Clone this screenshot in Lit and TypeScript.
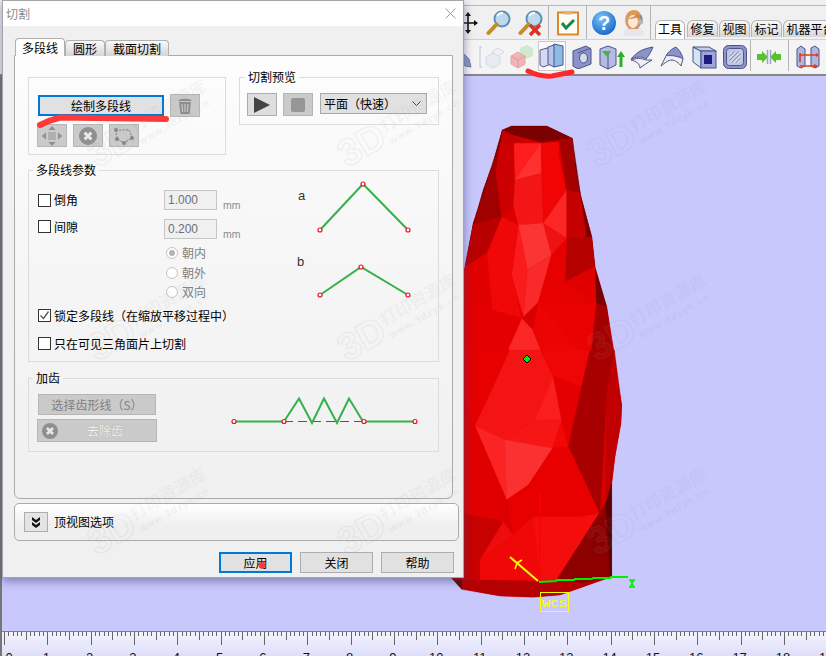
import { LitElement, html, css, svg } from 'lit';
import { customElement } from 'lit/decorators.js';

const CJK = css`"Noto Sans CJK SC", "Liberation Sans", sans-serif`;

// ---- toolbar icons ----
const moveIcon = svg`<svg width="20" height="22" viewBox="0 0 20 22"><path d="M10 1v20M1 11h18" stroke="#111" stroke-width="1.6"/><path d="M10 0l-3 4h6zM10 22l-3-4h6zM0 11l4-3v6zM20 11l-4-3v6z" fill="#111"/></svg>`;
const lens = svg`<circle cx="16" cy="9" r="7.5" fill="#bcd9ee" stroke="#5e8fb5" stroke-width="2"/><path d="M11 6a6 6 0 0 1 6-3" stroke="#fff" stroke-width="2" fill="none"/><path d="M10.5 14.5L2.5 23" stroke="#c58a2a" stroke-width="4" stroke-linecap="round"/>`;
const zoomIcon = svg`<svg width="26" height="26" viewBox="0 0 26 26">${lens}</svg>`;
const zoomXIcon = svg`<svg width="26" height="26" viewBox="0 0 26 26">${lens}<path d="M12 15l10 10M22 15L12 25" stroke="#e0301e" stroke-width="3.4"/></svg>`;
const clipIcon = svg`<svg width="22" height="26" viewBox="0 0 22 26"><rect x="1" y="2.5" width="20" height="22" fill="#fffdf5" stroke="#d98a2b" stroke-width="2"/><rect x="7" y="1" width="8" height="3.5" fill="#e8b070"/><path d="M5 13l4 5 8-8" fill="none" stroke="#15894a" stroke-width="3"/></svg>`;
const helpIcon = svg`<svg width="26" height="26" viewBox="0 0 26 26"><defs><radialGradient id="hb" cx=".4" cy=".3" r=".8"><stop offset="0" stop-color="#7cc4f8"/><stop offset="1" stop-color="#0a5fc8"/></radialGradient></defs><circle cx="13" cy="13" r="12" fill="url(#hb)"/><text x="13" y="20" text-anchor="middle" font-family="Liberation Sans" font-weight="700" font-size="20" fill="#fff">?</text></svg>`;
const personIcon = svg`<svg width="24" height="28" viewBox="0 0 24 28"><path d="M2 27c-1-7 4-9 10-9s11 2 10 9z" fill="#e4e8ee"/><path d="M4 16C1 6 7 1 12 1s9 4 7 14l-3 5H7z" fill="#dc9a5a"/><ellipse cx="11" cy="12.5" rx="5" ry="6.5" fill="#fde6d4"/><path d="M5 9c4 0 9-1 11-5l2 6-3-2c-3 2-6 2-10 1z" fill="#cf8240"/><path d="M18 6a8 8 0 0 1 1 8" stroke="#888" stroke-width="2" fill="none"/><circle cx="18.5" cy="13" r="2.5" fill="#b5b5b5"/><path d="M18 16l-5 3" stroke="#999"/></svg>`;

const blue = '#8b93c8';
const blueD = '#4d5488';
const clipLeft = svg`<svg width="16" height="24" viewBox="0 0 16 24"><path d="M2 4l10 10 2 8-6-1-8-9z" fill="#8a9ac0" stroke="#707c9c"/></svg>`;
const ghostCube = svg`<svg width="28" height="26" viewBox="0 0 28 26"><path d="M4 3H2v20h2" fill="none" stroke="#cdd3de" stroke-width="1.5"/><path d="M8 13l7-4 7 4v7l-7 4-7-4z" fill="#e8ebf2" stroke="#d3d8e4"/><path d="M14 8l6-4 6 4-6 4z" fill="#eff1f6" stroke="#d8dce6"/></svg>`;
const redCube = svg`<svg width="24" height="26" viewBox="0 0 24 26"><path d="M10 4l7-3 6 3v8l-7 3-6-3z" fill="#cfe8cf"/><path d="M1 12l7-4 7 4v8l-7 4-7-4z" fill="#eeb6b6" stroke="#e6a8a8"/><path d="M8 16v8M1 12l7 4 7-4" stroke="#e09a9a" fill="none"/></svg>`;
const sliceIcon = svg`<svg width="26" height="26" viewBox="0 0 26 26"><path d="M1 7l11-3v17l-8 3-3-2z" fill="#d4d8f2" stroke="${blueD}"/><path d="M12 4l3-3 9 2v19l-9 2-3-3z" fill="#8cbce6" stroke="${blueD}"/><path d="M9 4l6-2v22l-6-3z" fill="#b4c4ea" stroke="${blueD}"/></svg>`;
const holeIcon = svg`<svg width="20" height="24" viewBox="0 0 20 24"><path d="M1 6l13-5 5 3v15l-13 5-5-3z" fill="${blue}" stroke="${blueD}"/><path d="M6 8l13-5" stroke="${blueD}"/><ellipse cx="11.5" cy="13" rx="4" ry="5" fill="#d8dcec" stroke="${blueD}"/></svg>`;
const arrowBox = svg`<svg width="26" height="26" viewBox="0 0 26 26"><path d="M1 5l8-3 8 3v16l-8 4-8-4z" fill="#b6bbe0" stroke="${blueD}"/><path d="M9 8v17" stroke="${blueD}"/><path d="M3 7h9l-4 6z" fill="#45b545"/><path d="M22 7l4 6h-2.5v10h-3V13H18z" fill="#2bb02b"/></svg>`;
const surfA = svg`<svg width="24" height="24" viewBox="0 0 24 24"><path d="M1 14C7 7 12 4 23 2c-3 7-4 8-7 12C11 11 6 12 1 14z" fill="${blue}" stroke="${blueD}"/><path d="M1 15c5-2 10-2 15 0l6 0c-5 3-8 5-12 8 0-4-4-7-9-8z" fill="#eef0f6" stroke="${blueD}"/></svg>`;
const surfB = svg`<svg width="24" height="22" viewBox="0 0 24 22"><path d="M6 10C9 4 14 2 16 1c2 2 6 6 7 12-5-3-11-4-17-3z" fill="${blue}" stroke="${blueD}"/><path d="M6 10L1 20c4-3 7-6 11-6 3 0 7 3 9 6l2-7" fill="#eef0f6" stroke="${blueD}"/></svg>`;
const tunnel = svg`<svg width="25" height="24" viewBox="0 0 25 24"><path d="M1 2l8 4v17L1 17z" fill="#d4e4f6" stroke="${blueD}"/><path d="M1 2h16l7 4H9z" fill="#c8ccea" stroke="${blueD}"/><rect x="9" y="6" width="15" height="17" fill="#9ca6dc" stroke="${blueD}"/><rect x="12" y="10" width="8" height="9" fill="#1c1c80"/></svg>`;
const hatch = svg`<svg width="24" height="24" viewBox="0 0 24 24"><defs><pattern id="ht" width="3" height="3" patternUnits="userSpaceOnUse" patternTransform="rotate(45)"><rect width="3" height="3" fill="#e2e4f2"/><rect width="1.2" height="3" fill="#8088b8"/></pattern></defs><rect x=".5" y=".5" width="23" height="23" rx="5" fill="${blue}" stroke="${blueD}"/><rect x="3.5" y="3.5" width="17" height="17" rx="3" fill="#c2c6e4" stroke="${blueD}"/><rect x="6.5" y="6.5" width="11" height="11" fill="url(#ht)"/></svg>`;
const squeeze = svg`<svg width="26" height="14" viewBox="0 0 26 14"><path d="M1 4h5V1l6 6-6 6v-3H1z" fill="#58c22a"/><path d="M25 4h-5V1l-6 6 6 6v-3h5z" fill="#58c22a"/><path d="M11.5 0v14M14.5 0v14" stroke="#9aa4cc" stroke-width="1.5"/></svg>`;
const redArrows = svg`<svg width="24" height="24" viewBox="0 0 24 24"><path d="M1 4l4-3 4 3v17l-4 2-4-2zM15 3l4-2 4 3v17l-4 2-4-2z" fill="#b0b6de" stroke="${blueD}"/><path d="M4 10h16M4 21h17" stroke="#e03a22" stroke-width="1.6"/><path d="M4 8v9" stroke="#e03a22" stroke-width="1.6"/><path d="M20 8l3 2-3 2zM18 19l4 2-4 2z" fill="#e03a22"/></svg>`;

const row1Icons = [moveIcon, zoomIcon, zoomXIcon, null, clipIcon, null, helpIcon, personIcon, null];
const row2Icons = [clipLeft, ghostCube, redCube, sliceIcon, holeIcon, arrowBox, surfA, surfB, tunnel, hatch, null, squeeze, null, redArrows];
const topTabs = ['工具', '修复', '视图', '标记', '机器平台'];

@customElement('main-toolbar')
export class MainToolbar extends LitElement {
  static styles = css`
    :host { display: block; height: 76px; box-sizing: border-box; padding: 5px 0 0 452px; background: #f0f0f0; border-bottom: 2px solid #868686; overflow: hidden; }
    .row1 { display: grid; grid-template-columns: 31px 32px 31px 4px 35px 2px 33px 28px 4px auto; height: 34px; border-top: 1px solid #b9b9b9; box-sizing: border-box; }
    .row2 { display: grid; grid-template-columns: 26px 28px 31px 30px 29px 31px 30px 30px 35px 26px 4px 34px 4px 36px; height: 35px; border-top: 1px solid #d2d2d2; box-sizing: border-box; background: #f4f4f4; }
    .cell { display: flex; align-items: center; justify-content: center; min-width: 0; }
    .cell.on { margin: 1px 1px 3px; border: 1px solid #c8c8c8; background: #fbfbfb; }
    .sep { width: 1px; justify-self: center; background: #b4b4b4; }
    .row2 .sep { margin-bottom: 3px; }
    .tabs { display: flex; align-self: end; gap: 1px; margin-left: 3px; white-space: nowrap; }
    .tab { box-sizing: border-box; height: 17px; padding: 0 2.5px; font: 12px/16px ${CJK}; color: #000; background: linear-gradient(#f8f8f8, #d6d6d6); border: 1px solid #b4b4b4; border-bottom: none; border-radius: 6px 6px 0 0; }
    .tab.active { height: 19px; padding: 0 2px; background: #fff; margin-right: 1px; }
  `;

  render() {
    return html`
      <div class="row1">
        ${row1Icons.map((i) => (i ? html`<div class="cell">${i}</div>` : html`<div class="sep"></div>`))}
        <div class="tabs">
          ${topTabs.map((t, n) => html`<div class="tab ${n === 0 ? 'active' : ''}">${t}</div>`)}
        </div>
      </div>
      <div class="row2">
        ${row2Icons.map((i, n) => (i ? html`<div class="cell ${n === 3 ? 'on' : ''}">${i}</div>` : html`<div class="sep"></div>`))}
      </div>
    `;
  }
}

// ---- 3D view: facets traced in 3x coordinates ----
const upper: [string, string][] = [
  ['187,60 215,48 320,48 397,85 303,98 215,75', '#7d0000'],
  ['187,60 215,75 262,100 180,100', '#c40000'],
  ['215,75 303,98 262,100', '#d40000'],
  ['303,98 397,85 358,95', '#b00000'],
  ['180,100 168,190 185,320 100,345 130,240', '#a00000'],
  ['187,60 155,170 100,340 75,470 100,345 130,240 180,100', '#6c0000'],
  ['180,100 222,100 225,210 220,285 185,320 168,190', '#cc0000'],
  ['222,100 303,100 225,210', '#ff1c1c'],
  ['303,100 305,190 225,210', '#ff3030'],
  ['225,210 305,190 310,340 235,345 220,285', '#f41616'],
  ['303,100 358,95 355,130 378,240 310,340 305,190', '#f00404'],
  ['310,340 380,240 380,385', '#fb2626'],
  ['358,95 397,85 405,170 420,250 380,240', '#a40000'],
  ['380,240 420,250 455,380 380,385', '#c40000'],
  ['397,85 405,170 420,250 455,380 465,470 500,590 468,580 430,310', '#7a0000'],
  ['235,345 310,340 335,435 262,480', '#fb3434'],
  ['310,340 380,385 335,435', '#f01212'],
  ['262,480 335,435 295,575 250,620', '#fb2a2a'],
  ['235,345 262,480 250,620 215,495', '#fa1c1c'],
  ['185,320 235,345 215,495 245,625 155,600 140,430', '#f00808'],
  ['100,345 185,320 140,430 75,470', '#b80000'],
  ['75,470 140,430 155,600 75,560', '#e00000'],
  ['380,385 455,380 465,470 375,515', '#b50000'],
  ['335,435 380,385 375,515 465,575 295,575', '#e60000'],
  ['375,515 465,470 468,580', '#e00000'],
  ['468,580 500,590 523,750 450,750', '#a40000'],
  ['295,575 468,580 450,750 380,680', '#ea0202'],
  ['245,625 278,660 315,750 190,750', '#fb2626'],
  ['278,660 295,575 380,680 450,750 315,750', '#ec0404'],
  ['75,560 155,600 245,625 190,750 75,750', '#e40000'],
];
const lower: [string, string][] = [
  ['75,0 210,0 165,100 105,228 75,150', '#e60000'],
  ['210,0 300,0 340,80 285,210 195,270 105,228 165,100', '#f41414'],
  ['300,0 450,0 425,110 340,80', '#ee0505'],
  ['340,80 365,210 285,210', '#fb1e1e'],
  ['285,210 365,210 338,295 195,270', '#f61616'],
  ['365,210 385,290 338,295', '#f20606'],
  ['340,80 425,110 385,290 365,210', '#e40000'],
  ['105,228 195,270 200,450', '#fb2424'],
  ['195,270 338,295 265,405 200,450', '#fb3030'],
  ['425,110 450,0 523,0 500,130 480,490 385,290', '#a80000'],
  ['500,130 523,0 545,165 543,220 525,320 515,400 497,460', '#c00000'],
  ['265,405 338,295 385,290 478,490 420,500 280,500', '#e80000'],
  ['200,450 265,405 280,500 220,555', '#e60000'],
  ['75,150 105,228 200,450 190,515 75,490', '#e00000'],
  ['75,490 190,515 120,630 120,690 65,690 35,685', '#c80000'],
  ['190,515 220,555 120,630', '#ee0c0c'],
  ['220,555 280,500 298,580 300,690 120,690 120,630', '#f00808'],
  ['280,500 420,500 478,490 350,690 300,690', '#f30d0d'],
  ['478,490 497,460 510,680 430,700 350,690', '#8c0000'],
  ['65,690 120,690 300,695 350,690 430,700 510,680 430,710 360,735 280,742 180,738 65,718', '#b40000'],
  ['35,685 65,690 65,718', '#700000'],
  ['515,400 497,460 510,680 515,680', '#5c0000'],
];
const outline = '502,130 512,126 547,126 572,138 575,167 580,193 592,237 595,267 607,307 614,350 617,377 622,405 621,423 615,457 612,483 612,577 583,587 560,595 533,597 500,596 462,589 452,578 440,400 440,300 465,267 473,223 492,167';

const facets = (list: [string, string][]) =>
  list.map(([p, c]) => svg`<polygon points=${p} fill=${c} stroke=${c} stroke-width="1"/>`);

@customElement('model-view')
export class ModelView extends LitElement {
  static styles = css`
    :host { position: absolute; inset: 0; display: block; }
    svg { display: block; }
    text { font-family: "Liberation Mono", monospace; }
  `;

  render() {
    return html`<svg width="826" height="656" viewBox="0 0 826 656">
      <polygon points=${outline} fill="#d80000"/>
      <g transform="translate(440 110) scale(.33333)">${facets(upper)}</g>
      <g transform="translate(440 350) scale(.33333)">${facets(lower)}</g>
      <path d="M540 493V582" stroke="#ff0000" stroke-width="1.3"/>
      <path d="M544 495h7l-7 8h7" stroke="#e80000" stroke-width="1.2" fill="none"/>
      <path d="M510 557L538 581" stroke="#ffff00" stroke-width="2"/>
      <path d="M513 560l4 3 5-3M517 563l-2 6" stroke="#ffff00" stroke-width="1.5" fill="none"/>
      <path d="M539 582l17-1 1-1h17l1-1h17l1-1h17l1-1h17" stroke="#00ee00" stroke-width="2" fill="none"/>
      <path d="M629 580h6M629 587h6M630 580l4 7M634 580l-4 7" stroke="#00ee00" stroke-width="1.5" fill="none"/>
      <rect x="540.5" y="592.5" width="28" height="19" fill="none" stroke="#ffff00" stroke-width="1"/>
      <text x="542" y="607" font-size="11.5" fill="#ffff00" textLength="25" lengthAdjust="spacingAndGlyphs">WCS</text>
      <path d="M527 355l4 4-4 4-4-4z" fill="#00ee00" stroke="#000" stroke-width="1"/>
    </svg>`;
  }
}

// ---- ruler ----
const OX = 2;
const STEP = 43.33;
const ticks = Array.from({ length: 190 }, (_, i) => i);

@customElement('view-ruler')
export class ViewRuler extends LitElement {
  static styles = css`
    :host { display: block; height: 25px; border-top: 1px solid #7d7d8a; box-sizing: border-box; background: linear-gradient(#f3f3fe, #dedefb); overflow: hidden; }
    svg { display: block; }
    text { font: 13px "Liberation Sans", sans-serif; fill: #111; }
  `;

  render() {
    return html`<svg width="826" height="24" viewBox="0 0 826 24">
      ${ticks.map((i) => {
        const x = Math.round(OX + (i * STEP) / 10) + 0.5;
        const h = i % 10 === 0 ? 13 : i % 5 === 0 ? 8 : 4;
        return svg`<path d="M${x} 0v${h}" stroke="#666" stroke-width="1"/>`;
      })}
      ${Array.from({ length: 20 }, (_, n) =>
        svg`<text x=${n === 0 ? 7 : OX + n * STEP - 1} y="30" text-anchor="middle">${n}</text>`)}
    </svg>`;
  }
}

// ---- cut dialog ----
const trash = svg`<svg width="16" height="18" viewBox="0 0 16 18"><path d="M2 5h12l-1.5 12h-9z" fill="#8e8e8e"/><path d="M1 4c1-3 13-3 14 0z" fill="#8e8e8e"/><path d="M5 7l.6 8M8 7v8M11 7l-.6 8" stroke="#cdcdcd" stroke-width="1.1"/></svg>`;
const moveGrey = svg`<svg width="20" height="20" viewBox="0 0 20 20"><path d="M10 0l3.5 4h-7zM10 20l3.5-4h-7zM0 10l4-3.5v7zM20 10l-4-3.5v7z" fill="#8f8f8f"/><rect x="6" y="6" width="8" height="8" fill="#b0b0b0"/></svg>`;
const xCircle = (size: number) => svg`<svg width=${size} height=${size} viewBox="0 0 16 16"><circle cx="8" cy="8" r="8" fill="#8f8f8f"/><path d="M5 5l6 6M11 5l-6 6" stroke="#e8e8e8" stroke-width="2.6"/></svg>`;
const polyGrey = svg`<svg width="22" height="18" viewBox="0 0 22 18"><path d="M3 3h13l3 8-8 5-7-4z" fill="none" stroke="#8f8f8f" stroke-width="1.3" stroke-dasharray="2 1.3"/><g fill="#858585"><circle cx="3" cy="3" r="2"/><circle cx="4" cy="12" r="2"/><circle cx="11" cy="16" r="2"/><circle cx="19" cy="11" r="2"/></g></svg>`;
const play = svg`<svg width="16" height="16" viewBox="0 0 16 16"><path d="M0 0l16 8-16 8z" fill="#444"/></svg>`;
const stop = svg`<svg width="14" height="14" viewBox="0 0 14 14"><rect width="14" height="14" rx="2" fill="#969696"/></svg>`;
const chevDown = svg`<svg width="9" height="6" viewBox="0 0 9 6"><path d="M.5.5l4 4 4-4" fill="none" stroke="#444"/></svg>`;
const dblChev = svg`<svg width="10" height="11" viewBox="0 0 10 11"><path d="M1 0l4 3 4-3v3L5 6 1 3zM1 5l4 3 4-3v3l-4 3-4-3z" fill="#111"/></svg>`;
const check = svg`<svg width="11" height="11" viewBox="0 0 11 11"><path d="M1.5 5.5l3 3 5-7" fill="none" stroke="#555" stroke-width="1.3"/></svg>`;

const dot = (x: number, y: number) => svg`<circle cx=${x} cy=${y} r="2" fill="#fff" stroke="#e8142c" stroke-width="1.2"/>`;
const shapes = svg`<svg class="shapes" width="132" height="124" viewBox="290 178 132 124">
  <text x="298" y="199" font-size="13" fill="#333">a</text>
  <text x="297" y="265" font-size="13" fill="#333">b</text>
  <path d="M320 229L363 183L408 229" fill="none" stroke="#36b14a" stroke-width="2"/>
  ${dot(320, 229)}${dot(363, 183)}${dot(408, 229)}
  <path d="M320 294L361 266L408 294" fill="none" stroke="#36b14a" stroke-width="2"/>
  ${dot(320, 294)}${dot(361, 266)}${dot(408, 294)}
</svg>`;
const teeth = svg`<svg class="teeth" width="190" height="34" viewBox="229 396 190 34">
  <path d="M283 421.5h80" stroke="#e8142c" stroke-dasharray="9 5" fill="none"/>
  <path d="M233 421.5H283L298 398.5L311 423L323 398.5L336 423L348 398.5L362 421.5H414" fill="none" stroke="#36b14a" stroke-width="2"/>
  ${dot(233, 421.5)}${dot(283, 421.5)}${dot(363, 421.5)}${dot(414, 421.5)}
</svg>`;

const box = (checked: boolean) => html`<span class="box">${checked ? check : ''}</span>`;

@customElement('cut-dialog')
export class CutDialog extends LitElement {
  static styles = css`
    :host { position: absolute; left: 2px; top: 0; width: 462px; height: 578px; box-sizing: border-box; display: block; background: #f0f0f0; border: 1px solid #a6a6a6; box-shadow: 0 3px 9px rgba(60, 60, 120, .55); font: 12px/16px ${CJK}; color: #000; }
    .title { display: flex; align-items: center; justify-content: space-between; height: 25px; padding: 0 7px 0 3px; background: #fff; color: #8c8c8c; }
    .close { width: 11px; height: 11px; }
    .body { padding: 12px 4px 0 11px; }
    .tabs { display: flex; align-items: flex-end; height: 18px; position: relative; z-index: 1; margin: 0 0 -1px 1px; }
    .tab { box-sizing: border-box; height: 16px; padding: 0 7px; line-height: 15px; background: linear-gradient(#fafafa, #d4d4d4); border: 1px solid #b0b0b0; border-bottom: none; border-radius: 4px 4px 0 0; }
    .tab.active { height: 18px; padding: 0 6px; background: #fff; line-height: 17px; }
    .pane { box-sizing: border-box; width: 439px; height: 444px; padding: 21px 13px 0; border: 1px solid #ababab; border-radius: 0 0 6px 6px; background: linear-gradient(#fdfdfd, #f6f6f6 45%, #f0f0f0); }
    .top { display: flex; gap: 13px; align-items: flex-start; margin-bottom: 15px; }
    fieldset { margin: 0; padding: 0; border: 1px solid #dcdcdc; min-width: 0; box-sizing: border-box; }
    legend { padding: 0 3px; line-height: 14px; height: 14px; }
    .draw { width: 198px; height: 78px; padding: 16px 0 0 9px; display: grid; grid-template-columns: 126px 30px; column-gap: 6px; align-content: start; }
    .preview { width: 200px; height: 55px; margin-top: -7px; padding: 9px 0 0 7px; display: flex; gap: 6px; align-items: flex-start; }
    .preview legend { margin-left: -2px; }
    .btn { box-sizing: border-box; display: flex; align-items: center; justify-content: center; background: #e1e1e1; border: 1px solid #adadad; }
    .btn.primary { border: 2px solid #0078d7; }
    .dis { background: #cacaca; border-color: #b6b6b6; color: #8a8a8a; }
    .sq { width: 30px; height: 23px; }
    .draw .primary { height: 21px; margin-top: 1px; }
    .sub { grid-column: 1 / 3; display: flex; gap: 6px; margin: 7px 0 0 -1px; }
    .play { background: #dedede; }
    .select { box-sizing: border-box; width: 107px; height: 21px; margin-left: 1px; padding: 0 5px 0 3px; display: flex; align-items: center; justify-content: space-between; background: #e1e1e1; border: 1px solid #a8a8a8; }
    .params { height: 199px; margin-top: -7px; padding: 6px 0 0 9px; display: grid; grid-template-columns: 126px 90px 1fr; grid-template-rows: 34px 19px 7px 20px 19px 19px 29px 27px; align-items: center; }
    .params legend { margin-left: -5px; }
    .check { display: flex; align-items: center; gap: 3px; white-space: nowrap; }
    .box { box-sizing: border-box; display: inline-flex; align-items: center; justify-content: center; width: 13px; height: 13px; border: 1px solid #333; background: #fff; }
    .lock { grid-column: 1 / 3; grid-row: 7; }
    .only { grid-column: 1 / 3; grid-row: 8; }
    .field { display: flex; align-items: flex-end; gap: 6px; }
    .field.low { margin-top: 4px; }
    .num { box-sizing: border-box; width: 53px; height: 20px; padding-left: 3px; font: 12px/18px "Liberation Sans", sans-serif; color: #6f6f7a; background: #f0f0f0; border: 1px solid #c6c6c6; }
    .unit { font: 10.5px/12px "Liberation Sans", sans-serif; color: #8a8a8a; margin-bottom: -1px; }
    .radio { grid-column: 2; display: flex; align-items: center; gap: 4px; margin-left: 2px; color: #808080; }
    .r1 { grid-row: 4; }
    .r2 { grid-row: 5; }
    .r3 { grid-row: 6; }
    .dotbox { box-sizing: border-box; width: 12px; height: 12px; border: 1px solid #c4c4c4; border-radius: 50%; background: #fff; display: flex; align-items: center; justify-content: center; }
    .dotbox.on::after { content: ""; width: 6px; height: 6px; border-radius: 50%; background: #b4b4b4; }
    .shapes { grid-column: 3; grid-row: 1 / 7; align-self: start; margin: -4px 0 0 36px; display: block; font-family: "Liberation Sans", sans-serif; }
    .gear { height: 81px; margin-top: 9px; padding: 9px 0 0 8px; display: grid; grid-template-columns: 120px 1fr; grid-template-rows: 21px 23px; row-gap: 4px; }
    .gear legend { margin-left: -4px; }
    .gear .btn { color: #808080; }
    .gear .pick { width: 118px; margin-left: 1px; }
    .gear .rem { justify-content: flex-start; gap: 29px; padding-left: 4px; color: #f2f2f2; text-shadow: 0 0 1px #999; }
    .teeth { grid-column: 2; grid-row: 1 / 3; margin: 2px 0 0 73px; display: block; }
    .panel { box-sizing: border-box; width: 445px; height: 38px; margin-top: 4px; padding-left: 9px; display: flex; align-items: center; gap: 6px; border: 1px solid #ababab; border-radius: 5px; background: linear-gradient(#fff, #efefef 60%); }
    .panel .btn { width: 24px; height: 20px; background: #e4e4e4; }
    .actions { display: flex; justify-content: flex-end; gap: 8px; width: 440px; margin-top: 11px; }
    .actions .btn { width: 73px; height: 21px; }
  `;

  render() {
    return html`
      <div class="title">
        <span>切割</span>
        <svg class="close" viewBox="0 0 11 11"><path d="M.5.5l10 10M10.5.5l-10 10" stroke="#9a9a9a"/></svg>
      </div>
      <div class="body">
        <div class="tabs">
          <div class="tab active">多段线</div>
          <div class="tab">圆形</div>
          <div class="tab">截面切割</div>
        </div>
        <div class="pane">
          <div class="top">
            <fieldset class="draw">
              <div class="btn primary">绘制多段线</div>
              <div class="btn dis sq">${trash}</div>
              <div class="sub">
                <div class="btn dis sq">${moveGrey}</div>
                <div class="btn dis sq">${xCircle(18)}</div>
                <div class="btn dis sq">${polyGrey}</div>
              </div>
            </fieldset>
            <fieldset class="preview">
              <legend>切割预览</legend>
              <div class="btn sq play">${play}</div>
              <div class="btn dis sq">${stop}</div>
              <div class="select"><span>平面（快速）</span>${chevDown}</div>
            </fieldset>
          </div>
          <fieldset class="params">
            <legend>多段线参数</legend>
            <label class="check">${box(false)}倒角</label>
            <div class="field"><span class="num">1.000</span><span class="unit">mm</span></div>
            ${shapes}
            <label class="check">${box(false)}间隙</label>
            <div class="field low"><span class="num">0.200</span><span class="unit">mm</span></div>
            <div class="radio r1"><span class="dotbox on"></span>朝内</div>
            <div class="radio r2"><span class="dotbox"></span>朝外</div>
            <div class="radio r3"><span class="dotbox"></span>双向</div>
            <label class="check lock">${box(true)}锁定多段线（在缩放平移过程中）</label>
            <label class="check only">${box(false)}只在可见三角面片上切割</label>
          </fieldset>
          <fieldset class="gear">
            <legend>加齿</legend>
            <div class="btn dis pick">选择齿形线（S）</div>
            ${teeth}
            <div class="btn dis rem">${xCircle(16)}<span>去除齿</span></div>
          </fieldset>
        </div>
        <div class="panel">
          <div class="btn">${dblChev}</div>
          <span>顶视图选项</span>
        </div>
        <div class="actions">
          <div class="btn primary">应用</div>
          <div class="btn">关闭</div>
          <div class="btn">帮助</div>
        </div>
      </div>
    `;
  }
}

// ---- overlays ----
const markAt: [number, number][] = [];
for (const y of [168, 362, 556]) for (const x of [97, 347, 597]) markAt.push([x, y]);

@customElement('app-root')
export class AppRoot extends LitElement {
  static styles = css`
    :host { display: block; position: relative; width: 826px; height: 656px; overflow: hidden; background: #c8c8fc; font-family: ${CJK}; }
    .stage { display: grid; grid-template-rows: 76px 1fr 25px; height: 100%; }
    .canvas { background: #c8c8fc; border-left: 2px solid #777; }
    view-ruler { border-left: 2px solid #777; }
    .over { position: absolute; inset: 0; pointer-events: none; z-index: 5; }
    .mark text { font-family: ${CJK}; }
    .mark .logo { font: 700 38px "Liberation Sans", sans-serif; fill: rgba(255, 255, 255, .05); stroke: rgba(140, 140, 160, .11); stroke-width: 1.5; }
    .mark .cn { font-size: 17px; font-weight: 700; fill: rgba(130, 130, 150, .08); }
    .mark .url { font: 700 10px "Liberation Sans", sans-serif; fill: rgba(130, 130, 150, .1); letter-spacing: 1px; }
  `;

  render() {
    return html`
      <div class="stage">
        <main-toolbar></main-toolbar>
        <div class="canvas"></div>
        <view-ruler></view-ruler>
      </div>
      <model-view></model-view>
      <cut-dialog></cut-dialog>
      <svg class="over" width="826" height="656" viewBox="0 0 826 656">
        ${markAt.map(([x, y]) => svg`<g class="mark" transform="translate(${x} ${y}) rotate(-30)">
          <text class="logo" x="0" y="0">3D</text>
          <text class="cn" x="50" y="-12">打印资源库</text>
          <text class="url" x="50" y="2">www.3dzyk.cn</text>
        </g>`)}
        <path d="M40 125Q50 120 60 117.5L166 119" fill="none" stroke="#ff3838" stroke-width="6" stroke-linecap="round"/>
        <path d="M528 71Q540 77 552 76L572 72" fill="none" stroke="#ff2828" stroke-width="5" stroke-linecap="round"/>
        <circle cx="262" cy="565" r="3.5" fill="#ff3838"/>
      </svg>
    `;
  }
}
